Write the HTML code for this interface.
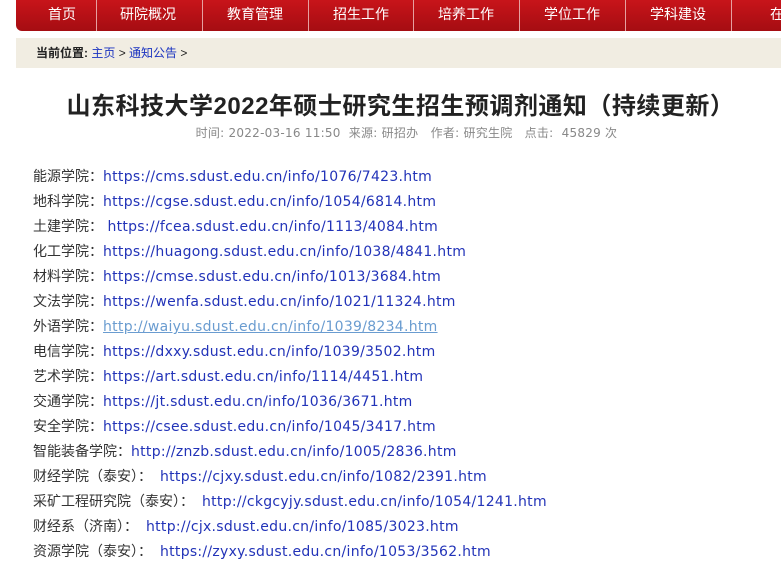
<!DOCTYPE html>
<html><head><meta charset="utf-8"><style>
*{margin:0;padding:0;box-sizing:border-box}
body{width:781px;height:580px;overflow:hidden;background:#fff;font-family:"Liberation Sans","Noto Sans CJK SC",sans-serif;position:relative}
.nav{position:absolute;left:16px;top:0;width:780px;height:31px;background:linear-gradient(#c8141a,#a50d12);border-bottom-left-radius:6px}
.nav span{position:absolute;top:0;height:31px;line-height:29px;color:#fff;font-size:14px;text-align:center;width:106px}
.sep{position:absolute;top:0;width:1px;height:31px;background:#e6a0a0}
.bc{position:absolute;left:16px;top:38px;width:765px;height:30px;background:#f1ede2;font-size:12px;line-height:30px;padding-left:20px;color:#222}
.bc b{font-weight:bold}
.bc a{color:#1a33c0;text-decoration:none}
h1{position:absolute;left:0;width:781px;padding-left:20px;top:86px;text-align:center;font-size:24px;font-weight:bold;color:#222;letter-spacing:0.5px}
.meta{position:absolute;left:0;width:781px;padding-left:32px;top:124px;text-align:center;font-size:12px;color:#888;letter-spacing:0.25px;font-family:"DejaVu Sans","Noto Sans CJK SC",sans-serif}
.row{position:absolute;left:33px;font-size:14px;color:#333;white-space:nowrap;font-family:"DejaVu Sans","Noto Sans CJK SC",sans-serif}
.row a{color:#2233b8;text-decoration:none;letter-spacing:0.28px}
.row a.v{color:#6a9cd0;text-decoration:underline}
.row a.p{padding-left:8px}
</style></head><body>
<div class="nav">
<span style="left:-7px">首页</span>
<span style="left:79px">研院概况</span>
<span style="left:186px">教育管理</span>
<span style="left:292px">招生工作</span>
<span style="left:397px">培养工作</span>
<span style="left:503px">学位工作</span>
<span style="left:609px">学科建设</span>
<span style="left:715px">在职</span>
<div class="sep" style="left:80px"></div><div class="sep" style="left:186px"></div><div class="sep" style="left:292px"></div><div class="sep" style="left:397px"></div><div class="sep" style="left:503px"></div><div class="sep" style="left:609px"></div><div class="sep" style="left:715px"></div>
</div>
<div class="bc"><b>当前位置:</b> <a>主页</a> &gt; <a>通知公告</a> &gt;</div>
<h1>山东科技大学2022年硕士研究生招生预调剂通知（持续更新）</h1>
<div class="meta">时间: 2022-03-16 11:50&nbsp; 来源: 研招办 &nbsp; 作者: 研究生院 &nbsp; 点击: &nbsp;45829 次</div>
<div class="row" style="top:166px">能源学院：<a>https://cms.sdust.edu.cn/info/1076/7423.htm</a></div>
<div class="row" style="top:191px">地科学院：<a>https://cgse.sdust.edu.cn/info/1054/6814.htm</a></div>
<div class="row" style="top:216px">土建学院： <a>https://fcea.sdust.edu.cn/info/1113/4084.htm</a></div>
<div class="row" style="top:241px">化工学院：<a>https://huagong.sdust.edu.cn/info/1038/4841.htm</a></div>
<div class="row" style="top:266px">材料学院：<a>https://cmse.sdust.edu.cn/info/1013/3684.htm</a></div>
<div class="row" style="top:291px">文法学院：<a>https://wenfa.sdust.edu.cn/info/1021/11324.htm</a></div>
<div class="row" style="top:316px">外语学院：<a class="v">http://waiyu.sdust.edu.cn/info/1039/8234.htm</a></div>
<div class="row" style="top:341px">电信学院：<a>https://dxxy.sdust.edu.cn/info/1039/3502.htm</a></div>
<div class="row" style="top:366px">艺术学院：<a>https://art.sdust.edu.cn/info/1114/4451.htm</a></div>
<div class="row" style="top:391px">交通学院：<a>https://jt.sdust.edu.cn/info/1036/3671.htm</a></div>
<div class="row" style="top:416px">安全学院：<a>https://csee.sdust.edu.cn/info/1045/3417.htm</a></div>
<div class="row" style="top:441px">智能装备学院：<a>http://znzb.sdust.edu.cn/info/1005/2836.htm</a></div>
<div class="row" style="top:466px">财经学院（泰安）：<a class="p">https://cjxy.sdust.edu.cn/info/1082/2391.htm</a></div>
<div class="row" style="top:491px">采矿工程研究院（泰安）：<a class="p">http://ckgcyjy.sdust.edu.cn/info/1054/1241.htm</a></div>
<div class="row" style="top:516px">财经系（济南）：<a class="p">http://cjx.sdust.edu.cn/info/1085/3023.htm</a></div>
<div class="row" style="top:541px">资源学院（泰安）：<a class="p">https://zyxy.sdust.edu.cn/info/1053/3562.htm</a></div>
</body></html>
